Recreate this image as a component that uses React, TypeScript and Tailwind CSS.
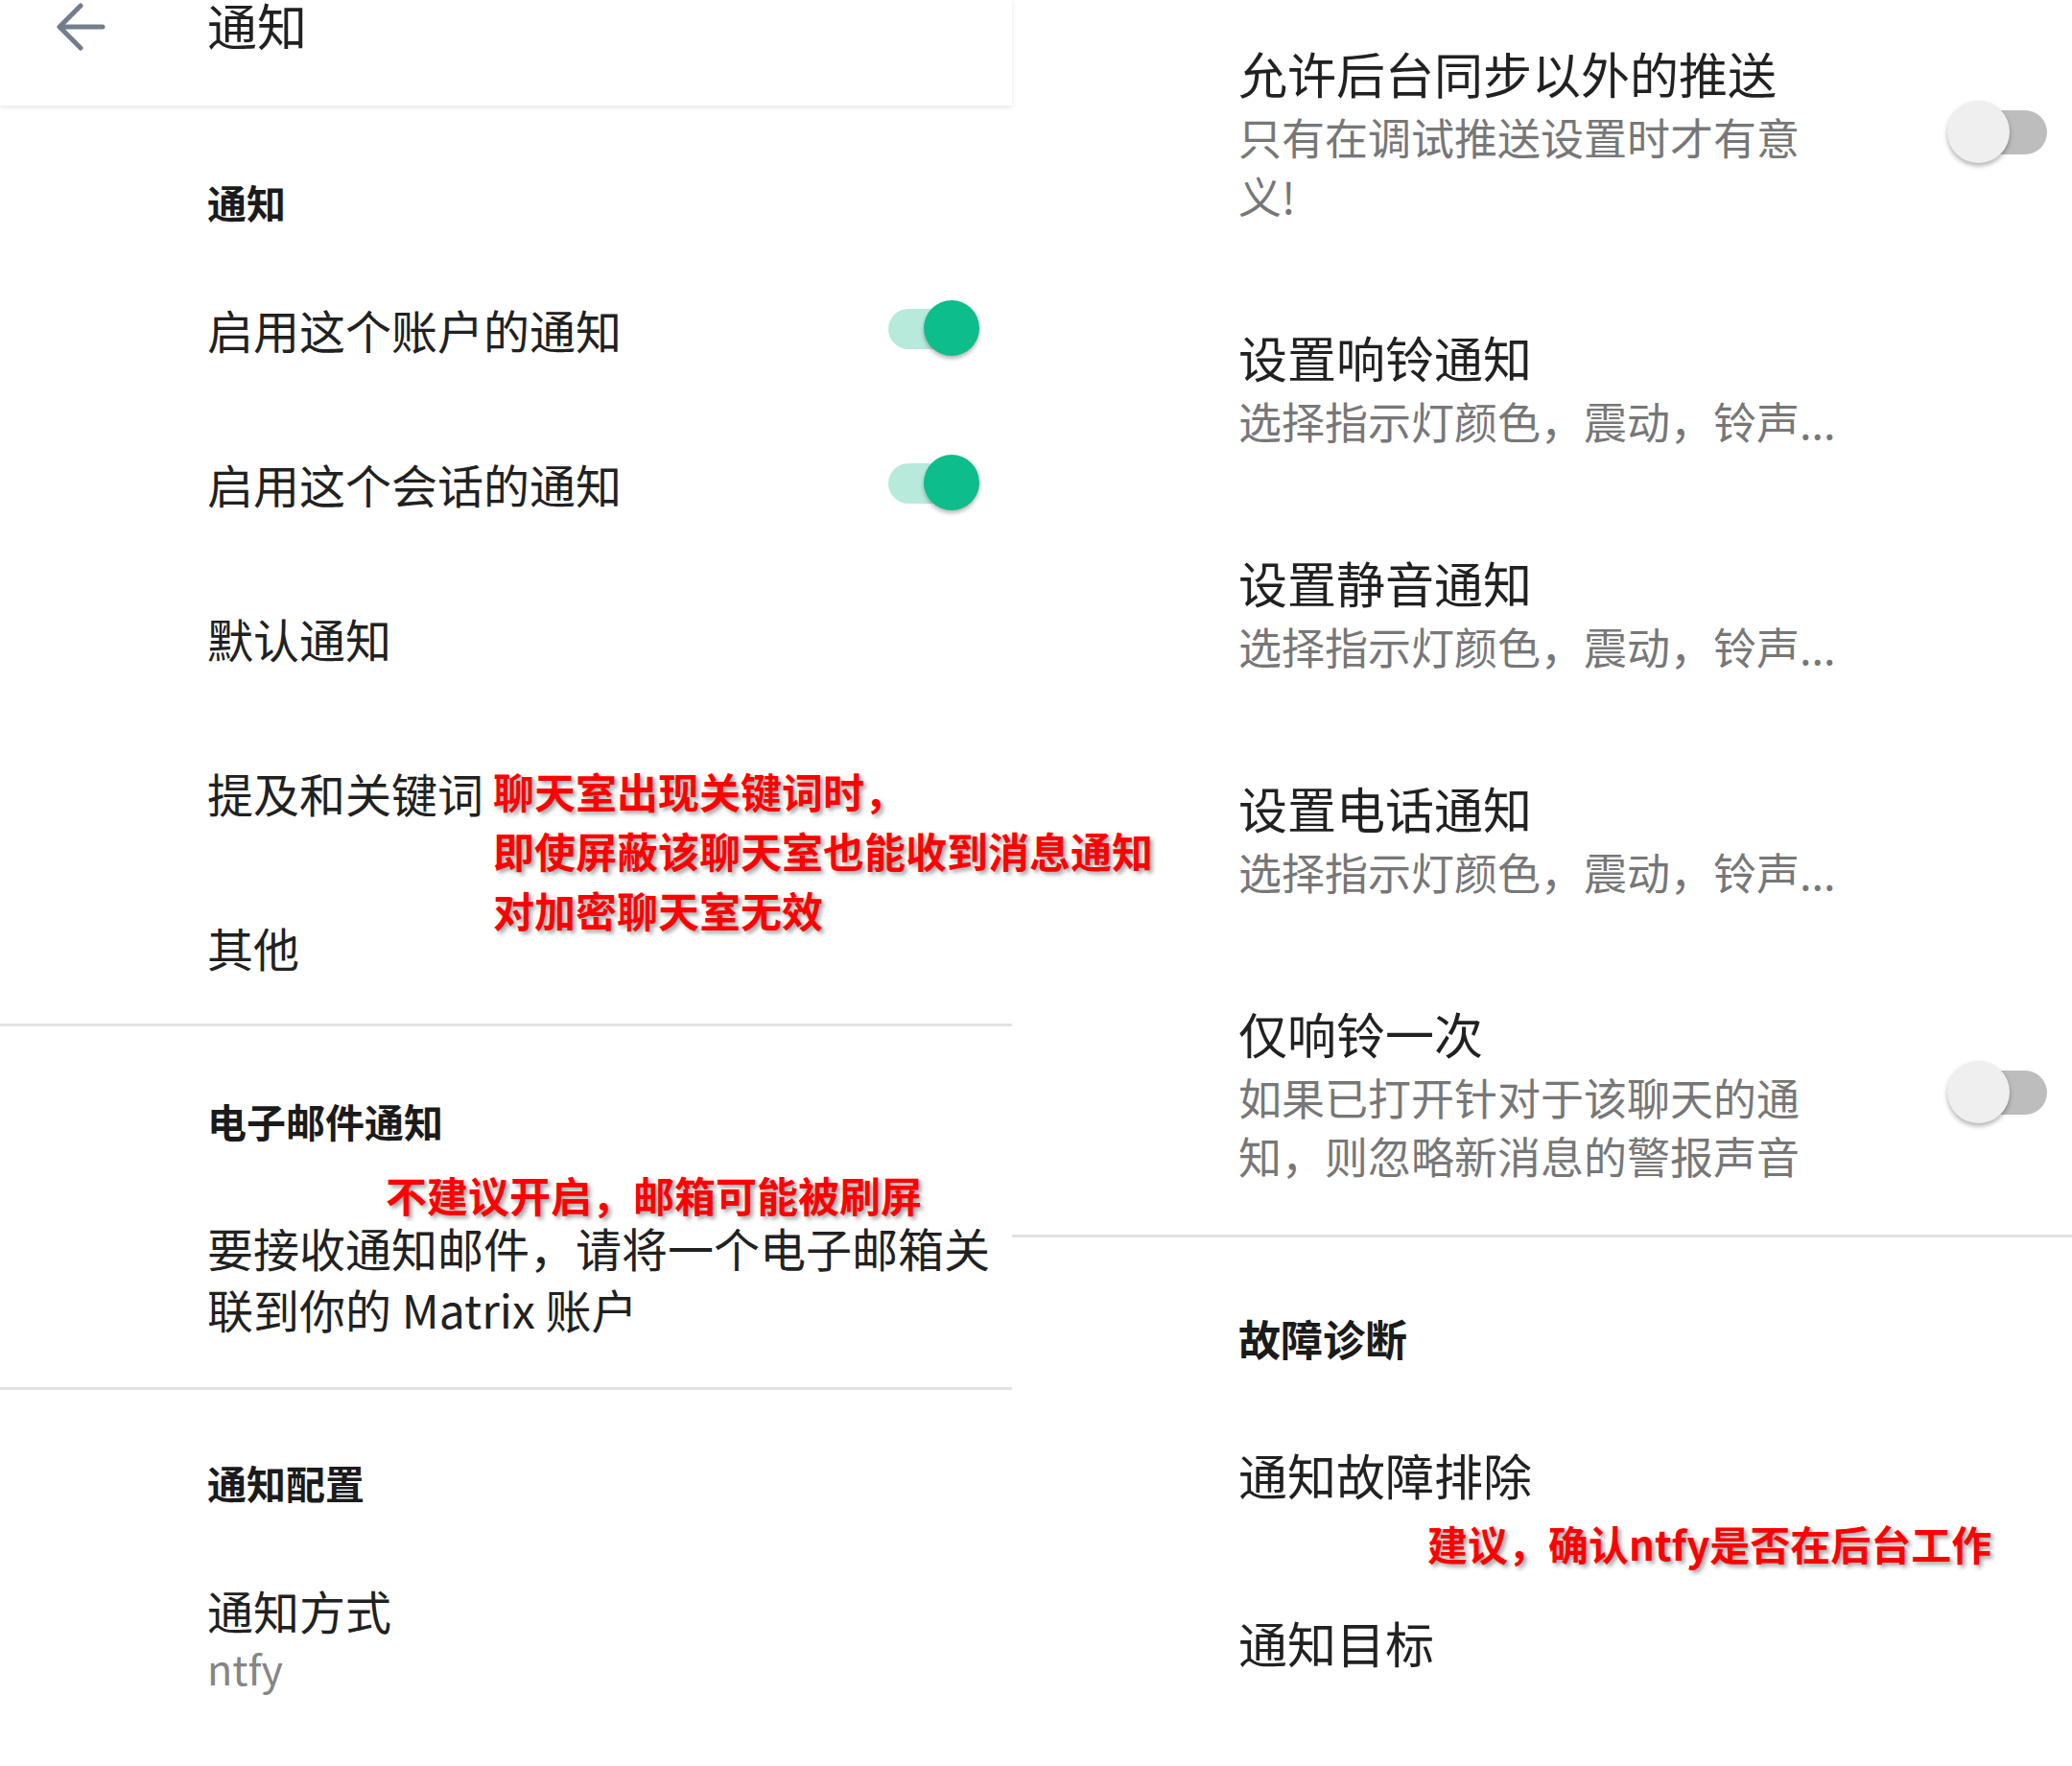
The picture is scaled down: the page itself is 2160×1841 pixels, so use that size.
import React from "react";

const ToggleOn = () => (
  <div className="relative h-[60px] w-[95px] shrink-0">
    <div className="absolute left-0 top-[9px] h-[42px] w-[80px] rounded-full bg-[#b7eadb]" />
    <div className="absolute right-0 top-0 h-[58px] w-[58px] rounded-full bg-[#0dbd8b] shadow-[0_3px_4px_rgba(0,0,0,0.28)]" />
  </div>
);

const ToggleOff = () => (
  <div className="relative h-[66px] w-[104px] shrink-0">
    <div className="absolute left-[15px] top-[10px] h-[46px] w-[89px] rounded-full bg-[#bdbdbd]" />
    <div className="absolute left-0 top-0 h-[65px] w-[65px] rounded-full bg-[#efefef] shadow-[0_3px_5px_rgba(0,0,0,0.3)]" />
  </div>
);

const LeftRow = ({ children, on }: { children: React.ReactNode; on?: boolean }) => (
  <div className="flex h-[161px] items-center justify-between pl-[216px] pr-[34px]">
    <div className="text-[48px] leading-[48px] text-[#212121]">{children}</div>
    {on && <ToggleOn />}
  </div>
);

const RightItem = ({
  title,
  sub,
  toggle,
  first,
}: {
  title: string;
  sub: string;
  toggle?: boolean;
  first?: boolean;
}) => (
  <div
    className={
      first
        ? "flex items-center justify-between pb-[51.5px] pl-[236px] pr-[26px] pt-[41px]"
        : "flex items-center justify-between py-[51.5px] pl-[236px] pr-[26px]"
    }
  >
    <div className={toggle ? "w-[600px]" : "whitespace-nowrap"}>
      <div className="text-[51px] leading-[71px] text-[#212121]">{title}</div>
      <div className="text-[45px] leading-[61px] text-[#777777]">{sub}</div>
    </div>
    {toggle && <ToggleOff />}
  </div>
);

const redNote =
  "font-bold text-[#ff0000] [text-shadow:3px_3px_4px_rgba(0,0,0,0.35)] whitespace-nowrap";

export default function App() {
  return (
    <div className="flex min-h-[1841px] w-full bg-white font-['Noto_Sans_CJK_SC',sans-serif]">
      {/* left screenshot */}
      <div className="w-[1055px] shrink-0">
        <header className="relative z-10 flex h-[110px] items-start bg-white shadow-[0_2px_5px_rgba(0,0,0,0.1)]">
          <svg
            className="ml-[58px] mt-[3px]"
            width="52"
            height="50"
            viewBox="0 0 52 50"
            fill="none"
            stroke="#737d8c"
            strokeWidth="5"
            strokeLinecap="round"
            strokeLinejoin="round"
          >
            <path d="M49 25H4M26 3L4 25l22 22" />
          </svg>
          <h1 className="ml-[106px] text-[52px] leading-none text-[#212121]">通知</h1>
        </header>

        <div className="h-[152px] pl-[216px] pt-[80px]">
          <h2 className="text-[41px] font-bold leading-none text-[#1b1b1b]">通知</h2>
        </div>
        <LeftRow on>启用这个账户的通知</LeftRow>
        <LeftRow on>启用这个会话的通知</LeftRow>
        <LeftRow>默认通知</LeftRow>
        <LeftRow>
          <span className="relative">
            提及和关键词
            <span className={`absolute left-[calc(100%+10px)] top-[2px] text-[43px] leading-[62px] ${redNote}`}>
              聊天室出现关键词时，
              <br />
              即使屏蔽该聊天室也能收到消息通知
              <br />
              对加密聊天室无效
            </span>
          </span>
        </LeftRow>
        <LeftRow>其他</LeftRow>
        <div className="h-[3px] bg-[#e2e2e2]" />

        <div className="pb-[50px] pl-[216px] pt-[78px]">
          <h2 className="text-[41px] font-bold leading-none text-[#1b1b1b]">电子邮件通知</h2>
          <div className={`ml-[186px] mt-[35px] text-[43px] leading-none ${redNote}`}>不建议开启，邮箱可能被刷屏</div>
          <p className="mt-[1px] w-[830px] text-[48px] leading-[64px] text-[#212121]">
            要接收通知邮件，请将一个电子邮箱关联到你的 Matrix 账户
          </p>
        </div>
        <div className="h-[3px] bg-[#e2e2e2]" />

        <div className="pl-[216px] pt-[76px]">
          <h2 className="text-[41px] font-bold leading-none text-[#1b1b1b]">通知配置</h2>
          <div className="mt-[88px] text-[48px] leading-[48px] text-[#212121]">通知方式</div>
          <div className="mt-[15px] text-[43px] leading-none text-[#858585]">ntfy</div>
        </div>
      </div>

      {/* right screenshot */}
      <div className="flex-1">
        <RightItem first toggle title="允许后台同步以外的推送" sub="只有在调试推送设置时才有意义!" />
        <RightItem title="设置响铃通知" sub="选择指示灯颜色，震动，铃声..." />
        <RightItem title="设置静音通知" sub="选择指示灯颜色，震动，铃声..." />
        <RightItem title="设置电话通知" sub="选择指示灯颜色，震动，铃声..." />
        <RightItem toggle title="仅响铃一次" sub="如果已打开针对于该聊天的通知，则忽略新消息的警报声音" />
        <div className="h-[3px] bg-[#e2e2e2]" />

        <div className="pl-[236px] pt-[83px]">
          <h2 className="text-[44px] font-bold leading-none text-[#1b1b1b]">故障诊断</h2>
          <div className="mt-[85px] text-[51px] leading-[71px] text-[#212121]">通知故障排除</div>
          <div className={`ml-[197px] mt-[15px] text-[42px] leading-none ${redNote}`}>建议，确认ntfy是否在后台工作</div>
          <div className="mt-[47px] text-[51px] leading-[71px] text-[#212121]">通知目标</div>
        </div>
      </div>
    </div>
  );
}
